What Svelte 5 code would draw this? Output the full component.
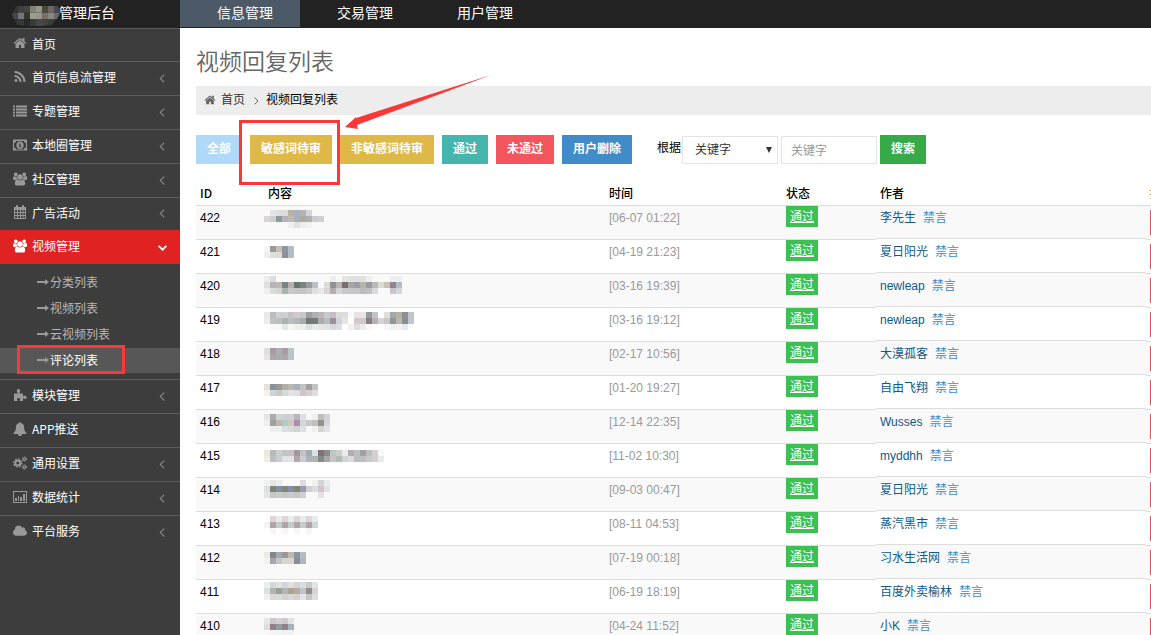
<script>
  const tabs = ['信息管理', '交易管理', '用户管理'];

  const menuTop = [
    { label: '首页', icon: 'home', short: true, leaf: true },
    { label: '首页信息流管理', icon: 'rss' },
    { label: '专题管理', icon: 'list' },
    { label: '本地圈管理', icon: 'money' },
    { label: '社区管理', icon: 'users' },
    { label: '广告活动', icon: 'calendar', short: true },
    { label: '视频管理', icon: 'users', active: true }
  ];
  const subMenu = ['分类列表', '视频列表', '云视频列表', '评论列表'];
  const menuBottom = [
    { label: '模块管理', icon: 'puzzle' },
    { label: 'APP推送', icon: 'bell', leaf: true },
    { label: '通用设置', icon: 'cogs' },
    { label: '数据统计', icon: 'chart' },
    { label: '平台服务', icon: 'cloud' }
  ];

  // Masked content: each string is one line of 6px blocks, "-" leaves a gap.
  const rows = [
    { id: 422, time: '06-07 01:22', author: '李先生', y: 4, mask: ['- e4e4e4 dedede dcdcde bab2a8 a8b2be b4b4b6 d4d6dc', 'dcd4d8 ccd0cc 8c9a9e b8b0bc c0b8ae a8b0b8 b0a8a2 b0b0b4 ccccd0 d0d0d4', '- - - - f0f0f0 dfe1e5 eeeeee f0f2ee'] },
    { id: 421, time: '04-19 21:23', author: '夏日阳光', y: 6, mask: ['f6f4f2 9c9896 c4beb8 8c96a0 b4bcc8', 'f2eee8 dce0de e0dad2 908e9a b4bcc6'] },
    { id: 420, time: '03-16 19:39', author: 'newleap', y: 2, mask: ['ececec dcdcdc - - - - - - - - - eeeeee - e4e4e4 e0e0e0 e0e0e0 e0e0e0 eeeeee - - - eceef0 eceef2', 'dedede b4b8b4 bcb6b4 748488 b8b0ac 6c7472 7c8480 989c9c b8c0c8 - dedcd6 909294 b8b4b0 786c6e a8a4a4 9c9ca8 b4b4ac 989c9c b8bab8 dadcd8 c8c4b0 908490 b4bcc8', 'eeeeee dcdcd8 d8d4d0 a8b4b0 c8c8cc c4c4c0 c4c4c0 cccccc dce0e4 e8e8e8 d8d4d4 b4acb0 d4d4d8 c8c8cc c4c8c8 c8c4c8 bcbcc0 c0c0c4 d8dadc - - d0c4cc d0d8e0'] },
    { id: 419, time: '03-16 19:12', author: 'newleap', y: 4, mask: ['e8e8e8 bcbcc0 d0d0d0 d0d0d4 c4c4c8 d4c8cc c4c8c8 9ca0a0 acb0b4 b8b8bc c8c8c8 c8bcc8 dcdcd8 e0dedc f5fbff ece0e8 eee4e6 989c98 c0c4cc - e0e0e0 a4a8a8 b4b0a4 8c9090 c0c4cc', 'ececec c0c4c0 bcc0c0 acb4b4 c0bcc4 b0b8b8 a8acac 707876 747c7a acacb0 b8bcc4 9c909c d0d4d8 e4e4e0 ffffff d4c8d0 d4c8d0 888078 b4b0c0 d4d4d8 c8c8c8 909898 c0b8b0 889090 c0c4cc', '- f8faf8 f8f8f4 e4e8e8 f8f4f4 f0f0f0 eeeeee dce0e0 e8ece8 e6e6e6 dce4e4 d8d8dc dce0e8 - f4f0f0 dce0dc ececec f8f8f8 - - f8f8f8 eef2f0 f2f2f2 e6eaec'] },
    { id: 418, time: '02-17 10:56', author: '大漠孤客', y: 6, mask: ['e0e0e0 a89ca4 acb0b4 a89ca4 bcc4c8', 'e4e4e4 b0a4ac a0b0b0 b0a4ac b8c4c8'] },
    { id: 417, time: '01-20 19:27', author: '自由飞翔', y: 8, mask: ['ecdfd4 88949c 9c9894 acb0a8 bcb8b0 a8b0bc c0c4c4 a4a0a0 c0c4c8', 'f4f0ea d0d4d4 c4cccc d8d8d8 e4e2e8 e0e0e4 ccc4c8 d4d0d0 dedee2'] },
    { id: 416, time: '12-14 22:35', author: 'Wusses', y: 4, mask: ['e8e4e0 a8acac d0d4d0 ccd0cc d0d0d0 bcb4bc dce0e4 f8f8f8 f0f0f0 bcc0b8 d0d4d8', 'f0eeea a0a09c bcb8b0 b4cac8 d0c8bc a88eaa d4d8d8 c8c8cc c4c0c0 909494 d4d8dc', '- eeeeee eaeeee dadee0 dadada d0d4d0 dce0e4 - f0f0ee d8d4d4 e4e4e8'] },
    { id: 415, time: '11-02 10:30', author: 'myddhh', y: 6, mask: ['f0e8e0 b4bcbc ccd0cc c4c4c4 ccc0c8 a098a0 c0c4bc a0acb8 dce0dc 80707a 8c8c88 bcc4cc ccd0cc ecece8 b4acbc bcc0b8 a0a0a8 bcc0c4 d8d0d0 f2faff', 'f4ece6 bcc0bc c8ccd4 e0e4e0 e4e4e4 b0a8a8 c8ccd0 b0b4b4 acb4b4 848a86 a4a8a8 c8c4c4 b4bcb8 d4d4d8 dcdcd8 bcbcc4 bcc0c0 ccc8c4 d0d0d8 ecece6'] },
    { id: 414, time: '09-03 00:47', author: '夏日阳光', y: 2, mask: ['f0f0f0 e6e6e6 ececec - - - dcdce2 - f0f0ee d4d4d4 e8eaec', 'dce0e0 808478 8490a0 808878 8490a0 808878 9c9ca8 d0d0d4 dcdce0 d4c4cc e0e4e8', 'e4e4e4 c4c8c4 c8ccd0 c4c8c4 c8ccd0 c4c8c4 ccd0d4 - - e8dfe8'] },
    { id: 413, time: '08-11 04:53', author: '蒸汽黑市', y: 4, mask: ['- dfd4da e8ebeb dfd4da e8ebeb dfd4da e8ebeb dfd4da e8ebeb', 'f4f4f0 b0a4ac c8ccc8 b0a4ac c8ccc8 b0a4ac c8ccc8 b0a4ac d0d6d8', '- f8f4f8 - f8f4f8 - f8f4f8 - f8f4f8'] },
    { id: 412, time: '07-19 00:18', author: '习水生活网', y: 6, mask: ['eeeae6 84888c a0a8b4 9c9894 bcb8b0 8c949c b4bcc4', 'f4f2ea a8a4b0 c8c4c0 d4d8d4 dcd4d0 8c8c98 b0b4c0'] },
    { id: 411, time: '06-19 18:19', author: '百度外卖榆林', y: 2, mask: ['eceeec d8d8dc e0e2dc d4d4dc e0e0dc d4d4d4 dadce4 c8ccc8 e4e4e8', 'd8e2e0 b4b4b0 98a09a b4b4b0 a8a498 b4ac9c c0c4d0 948e92 d4d4d8', 'f0f0f0 dadada d8dcd8 d4d0d0 d8d8d8 d4d0d0 e4e4e8 c4c8c8 dedee2'] },
    { id: 410, time: '04-24 11:52', author: '小K', y: 4, mask: ['e8e8e8 d0c6cc d0d4d4 d0c6cc e0e4e4', 'dedede 948088 909ca4 948088 a8b4bc', '- f4f4f4 f4f4f4 eef2f4 eef2f4'] }
  ];

  const logoMask = ['343434 404040 444444 808078 989490 4c4838 686868 484848', '444848 747676 343434 98a088 989490 787060 888480 686868', '303434 383838 282828 343c3c 484848 444440 3c3c3c 303030'];

  let field = $state('关键字');
  let keyword = $state('');
</script>

{#snippet blocks(lines, y)}
  {#each lines as line, r}
    {#each line.split(' ') as c, i}
      {#if c !== '-'}<rect x={i * 6} y={y + r * 6} width="6" height="6" fill={'#' + c} />{/if}
    {/each}
  {/each}
{/snippet}

{#snippet icon(name)}
  {#if name === 'home'}
    <svg class="ico" viewBox="0 0 1792 1792"><path d="M1472 992v480q0 26-19 45t-45 19h-384v-384h-256v384h-384q-26 0-45-19t-19-45v-480q0-1 .5-3t.5-3l575-474 575 474q1 2 1 6zm223-69l-62 74q-8 9-21 11h-3q-13 0-21-7l-692-577-692 577q-12 8-24 7-13-2-21-11l-62-74q-8-10-7-23.5t11-21.5l719-599q32-26 76-26t76 26l244 204v-195q0-14 9-23t23-9h192q14 0 23 9t9 23v408l219 182q10 8 11 21.5t-7 23.5z" /></svg>
  {:else if name === 'rss'}
    <svg class="ico" viewBox="0 0 1792 1792"><path d="M576 1344q0 80-56 136t-136 56-136-56-56-136 56-136 136-56 136 56 56 136zm512 123q2 28-17 48-18 21-47 21h-135q-25 0-43-16.5t-20-41.5q-22-229-184.5-391.5t-391.5-184.5q-25-2-41.5-20t-16.5-43v-135q0-29 21-47 17-17 43-17h5q160 13 306 80.5t259 181.5q114 113 181.5 259t80.5 306zm512 2q2 27-18 47-18 20-46 20h-143q-26 0-44.5-17.5t-19.5-42.5q-12-215-101-408.5t-231.5-336-336-231.5-408.5-102q-25-1-42.5-19.5t-17.5-43.5v-143q0-28 20-46 18-18 44-18h3q262 13 501.5 120t425.5 294q187 186 294 425.5t120 501.5z" /></svg>
  {:else if name === 'list'}
    <svg class="ico" viewBox="0 0 14 14"><path d="M0 1.500h2v2H0zM3 1.500h11v2H3zM0 4.500h2v2H0zM3 4.500h11v2H3zM0 7.500h2v2H0zM3 7.500h11v2H3zM0 10.500h2v2H0zM3 10.500h11v2H3z" /></svg>
  {:else if name === 'money'}
    <svg class="ico" viewBox="0 0 14 14"><path fill-rule="evenodd" d="M0 1.500h14v11H0zM1 5v4.500a2 2 0 0 1 2 2h8a2 2 0 0 1 2-2V5a2 2 0 0 1-2-2H3a2 2 0 0 1-2 2z" /><path fill-rule="evenodd" d="M7 3.400a3.600 3.800 0 1 1 0 7.600a3.600 3.800 0 1 1 0-7.600zM5.600 5.400v1h.8v2h-.9v.9h3v-.9h-.9v-3h-1z" /></svg>
  {:else if name === 'users'}
    <svg class="ico" viewBox="0 0 1920 1792"><path d="M593 896q-162 5-265 128h-134q-82 0-138-40.5t-56-118.5q0-353 124-353 6 0 43.5 21t97.5 42.5 119 21.5q67 0 133-23-5 37-5 66 0 159 92 293zm1071 637q0 120-73 189.5t-194 69.5h-874q-121 0-194-69.5t-73-189.5q0-53 3.5-103.5t14-109 26.5-108.5 43-97.5 62-81 85.5-53.5 111.5-20q10 0 43 21.5t73 48 107 48 135 21.5 135-21.5 107-48 73-48 43-21.5q61 0 111.5 20t85.5 53.5 62 81 43 97.5 26.5 108.5 14 109 3.5 103.5zm-1024-1277q0 106-75 181t-181 75-181-75-75-181 75-181 181-75 181 75 75 181zm704 384q0 159-112.5 271.5t-271.5 112.5-271.5-112.5-112.5-271.5 112.5-271.5 271.5-112.5 271.5 112.5 112.5 271.5zm576 225q0 78-56 118.5t-138 40.5h-134q-103-123-265-128 92-134 92-293 0-29-5-66 66 23 133 23 59 0 119-21.5t97.5-42.5 43.5-21q124 0 124 353zm-128-609q0 106-75 181t-181 75-181-75-75-181 75-181 181-75 181 75 75 181z" /></svg>
  {:else if name === 'calendar'}
    <svg class="ico" viewBox="0 0 14 14"><path fill-rule="evenodd" d="M1 2h2V1a1 1 0 0 1 2 0v1h4V1a1 1 0 0 1 2 0v1h2v12H1zM2 5v2h2V5zM5 5v2h2V5zM8 5v2h1.500V5zM10.500 5v2H12V5zM2 8v2h2V8zM5 8v2h2V8zM8 8v2h1.500V8zM10.500 8v2H12V8zM2 11v2h2v-2zM5 11v2h2v-2zM8 11v2h1.500v-2zM10.500 11v2H12v-2z" /></svg>
  {:else if name === 'puzzle'}
    <svg class="ico" viewBox="0 0 14 14"><path d="M1 5.500h3.300c.5 0 .6-.4.300-.8C3.300 3 3.700 1 5.500 1s2.200 2 1 3.700c-.3.400-.2.800.4.800H10v2.300c0 .6.500.8.900.5 1.400-1 2.600-.4 2.600 1.100s-1.200 2.100-2.600 1.100c-.4-.3-.9-.1-.9.500V13H7.200c-.6 0-.7-.4-.4-.8.8-1 .3-2.100-1.200-2.100s-2 1.100-1.200 2.100c.3.400.2.800-.4.800H1z" /></svg>
  {:else if name === 'bell'}
    <svg class="ico" viewBox="0 0 1792 1792"><path d="M1728 1408q0 52-38 90t-90 38h-448q0 106-75 181t-181 75-181-75-75-181h-448q-52 0-90-38t-38-90q50-42 91-88t85-119.500 74.500-158.500 50-206 19.500-260q0-152 117-282.500t307-158.500q-8-19-8-39 0-40 28-68t68-28 68 28 28 68q0 20-8 39 190 28 307 158.500t117 282.500q0 139 19.500 260t50 206 74.500 158.500 85 119.500 91 88z" /></svg>
  {:else if name === 'cogs'}
    <svg class="ico" viewBox="0 0 14 14">
      <g fill="none" stroke="currentColor">
        <circle cx="4.800" cy="7" r="2.600" stroke-width="2" />
        <circle cx="4.800" cy="7" r="4.100" stroke-width="1.300" stroke-dasharray="1.610 1.610" />
        <circle cx="11.400" cy="3" r="1.300" stroke-width="1.100" />
        <circle cx="11.400" cy="3" r="2.200" stroke-width=".9" stroke-dasharray="1.150 1.150" />
        <circle cx="11.400" cy="11" r="1.300" stroke-width="1.100" />
        <circle cx="11.400" cy="11" r="2.200" stroke-width=".9" stroke-dasharray="1.150 1.150" />
      </g>
    </svg>
  {:else if name === 'chart'}
    <svg class="ico" viewBox="0 0 14 14"><path fill-rule="evenodd" d="M0 1h14v12H0zM1 2v10h12V2zM2 8h2v3H2zM5 6h1v5H5zM7 7h2v4H7zM10 4h2v7h-2z" /></svg>
  {:else if name === 'cloud'}
    <svg class="ico" viewBox="64 128 1920 1536"><path d="M1984 1152q0 159-112.500 271.500t-271.500 112.500h-1088q-185 0-316.500-131.500t-131.500-316.500q0-132 71-241.500t187-163.500q-2-28-2-43 0-212 150-362t362-150q158 0 286.500 88t187.500 230q70-62 166-62 106 0 181 75t75 181q0 75-41 138 129 30 213 134.500t84 239.500z" /></svg>
  {/if}
{/snippet}

{#snippet entry(m)}
  <a class="item" class:short={m.short} class:active={m.active} href="#menu">
    {@render icon(m.icon)}
    <span>{m.label}</span>
    {#if m.active}
      <svg class="chev" viewBox="0 0 8 8"><path d="M.5 2.500L4 6l3.500-3.500" stroke-width="1.600" /></svg>
    {:else if !m.leaf}
      <svg class="chev" viewBox="0 0 8 8"><path d="M5.500 .5L2 4l3.500 3.500" /></svg>
    {/if}
  </a>
{/snippet}

<div class="page">
  <header>
    <div class="brand">
      <svg class="logo" width="48" height="20" viewBox="0 0 48 18" preserveAspectRatio="none" aria-hidden="true">
        <clipPath id="logoShape"><path d="M4 0h42l2 6-3 6-6 5-10 1H17L5 17 0 8z" /></clipPath>
        <g clip-path="url(#logoShape)">{@render blocks(logoMask, 0)}</g>
      </svg>
      <span>管理后台</span>
    </div>
    <nav class="tabs">
      {#each tabs as t, i}<a href="#tab" class:on={i === 0}>{t}</a>{/each}
    </nav>
  </header>

  <div class="body">
    <aside>
      {#each menuTop as m}{@render entry(m)}{/each}
      <div class="sub">
        {#each subMenu as s, i}
          <a href="#sub" class:current={i === 3}>
            <svg class="arrow" viewBox="0 0 12 8"><path d="M0 3h8V1l4 3-4 3V5H0z" /></svg>{s}
          </a>
        {/each}
      </div>
      {#each menuBottom as m}{@render entry(m)}{/each}
    </aside>

    <main>
      <h1>视频回复列表</h1>
      <div class="crumbs">
        {@render icon('home')}
        <a href="#home">首页</a>
        <svg class="sep" viewBox="0 0 8 8"><path d="M2.500 .5L6 4 2.500 7.500" /></svg>
        <span>视频回复列表</span>
      </div>

      <form class="toolbar" onsubmit={(e) => e.preventDefault()}>
        <button type="button" class="sky">全部</button>
        <span class="marked">
          <button type="button" class="gold">敏感词待审</button>
          <svg class="pointer" width="146" height="56" viewBox="0 0 146 56" aria-hidden="true"><path d="M146 1L11 44l0-1L0 53l13 2-1-4z" /></svg>
        </span>
        <button type="button" class="gold">非敏感词待审</button>
        <button type="button" class="teal">通过</button>
        <button type="button" class="red">未通过</button>
        <button type="button" class="blue">用户删除</button>
        <div class="search">
          <label for="field">根据</label>
          <div class="pick">
            <select id="field" bind:value={field}><option>关键字</option></select>
            <svg viewBox="0 0 8 8" aria-hidden="true"><path d="M1 1h6L4 7z" /></svg>
          </div>
          <input type="text" aria-label="关键字" placeholder="关键字" bind:value={keyword} />
          <button type="submit" class="green">搜索</button>
        </div>
      </form>

      <div class="grid">
        <table>
          <colgroup><col class="c1" /><col /><col class="c3" /><col class="c4" /><col class="c5" /><col class="c6" /></colgroup>
          <thead>
            <tr><th>ID</th><th>内容</th><th>时间</th><th>状态</th><th>作者</th><th>操作</th></tr>
          </thead>
          <tbody>
            {#each rows as r}
              <tr>
                <td>{r.id}</td>
                <td class="masked"><svg width="152" height="30" viewBox="0 0 152 30" shape-rendering="crispEdges">{@render blocks(r.mask, r.y)}</svg></td>
                <td class="time">[{r.time}]</td>
                <td class="state"><a href="#state">通过</a></td>
                <td class="author"><a href="#author">{r.author}</a><a class="mute" href="#mute">禁言</a></td>
                <td class="ops"><button type="button">删除</button></td>
              </tr>
            {/each}
          </tbody>
        </table>
      </div>
    </main>
  </div>
</div>

<style>
  :global(body) {
    margin: 0;
    overflow: hidden;
  }
  * {
    box-sizing: border-box;
  }
  .page {
    display: flex;
    flex-direction: column;
    height: 100vh;
    overflow: hidden;
    background: #fff;
    color: #000;
    font: 12px/17px 'Liberation Sans', 'Noto Sans CJK SC', sans-serif;
  }
  a {
    color: inherit;
    text-decoration: none;
  }
  button,
  input,
  select {
    font: inherit;
    margin: 0;
    border-radius: 0;
  }
  header {
    display: flex;
    height: 28px;
    flex: none;
    background: #222;
    color: #fff;
    font-size: 14px;
    line-height: 26px;
  }
  .brand {
    display: flex;
    width: 180px;
    padding-left: 12px;
  }
  .logo {
    margin-top: 6px;
    margin-right: -1px;
  }
  .tabs {
    display: flex;
  }
  .tabs a {
    width: 120px;
    height: 27px;
    padding-left: 37px;
  }
  .tabs .on {
    background: #4c5966;
  }
  .body {
    display: flex;
    flex: 1;
    min-height: 0;
  }
  aside {
    width: 180px;
    flex: none;
    background: #3d3d3d;
    color: #fff;
    font-family: 'Noto Sans CJK SC', sans-serif;
  }
  .item {
    display: flex;
    align-items: center;
    height: 34px;
    padding: 0 13px 4px;
    border-top: 1px solid #5c5c5c;
  }
  .item.short {
    height: 33px;
  }
  .item.active {
    border-color: #e02222;
    background: #e02222;
  }
  .ico {
    width: 14px;
    height: 14px;
    flex: none;
    margin-right: 5px;
    fill: currentColor;
    color: #999;
  }
  .active .ico {
    color: #fff;
  }
  .chev {
    width: 9px;
    height: 9px;
    margin: 3px 0 0 auto;
    fill: none;
    stroke: #888;
  }
  .active .chev {
    stroke: #fff;
  }
  .sub {
    display: flex;
    flex-direction: column;
    gap: 1px;
    padding: 6px 0;
    color: #b8b8b8;
  }
  .sub a {
    display: flex;
    align-items: center;
    height: 25px;
    padding: 0 0 3px 37px;
  }
  .arrow {
    width: 12px;
    height: 8px;
    margin: 2px 1px 0 0;
    fill: #999;
  }
  .sub .current {
    position: relative;
    background: #575757;
    color: #fff;
  }
  .current::after {
    content: '';
    position: absolute;
    inset: -3px 55px -1px 17px;
    border: 3px solid #fb3838;
  }
  main {
    flex: 1;
    min-width: 0;
    padding-left: 16px;
    overflow: hidden;
  }
  h1 {
    margin: 18px 0 8px;
    color: #666;
    font-size: 23px;
    font-weight: 350;
    line-height: 32px;
  }
  .crumbs {
    display: flex;
    align-items: center;
    height: 29px;
    padding: 0 8px 1px;
    background: #ededed;
    color: #333;
  }
  .crumbs .ico {
    width: 12px;
    height: 12px;
    color: #666;
  }
  .crumbs span {
    color: #000;
  }
  .sep {
    width: 8px;
    height: 8px;
    margin: 1px 6px 0 7px;
    fill: none;
    stroke: #666;
  }
  .toolbar {
    display: flex;
    gap: 8px;
    margin-top: 20px;
    white-space: nowrap;
  }
  .toolbar button {
    height: 29px;
    padding: 0 11px;
    border: 0;
    color: #fff;
    font-weight: 700;
  }
  .sky { background: #b0d8f8; }
  .gold { background: #dfb948; }
  .teal { background: #44b6ae; }
  .red { background: #f3565d; }
  .blue { background: #428bca; }
  .green { background: #35aa47; }
  .marked {
    position: relative;
    z-index: 1;
  }
  .marked::after {
    content: '';
    position: absolute;
    inset: -15px -8px -21px -11px;
    border: 3px solid #fb3838;
  }
  .pointer {
    position: absolute;
    left: 95px;
    top: -61px;
    fill: #fb3838;
  }
  .search {
    display: flex;
    margin-left: 17px;
  }
  .search label {
    padding: 5px 1px 0 0;
  }
  .pick {
    display: grid;
    margin-right: 3px;
  }
  .pick > * {
    grid-area: 1 / 1;
  }
  .pick svg {
    width: 8px;
    height: 8px;
    place-self: center end;
    margin-right: 5px;
    fill: #333;
    pointer-events: none;
  }
  select,
  input {
    width: 96px;
    height: 28px;
    margin-top: 1px;
    padding: 1px 9px 0;
    border: 1px solid #e5e5e5;
    background: #fff;
    color: #333;
  }
  select {
    appearance: none;
    padding-left: 12px;
  }
  input {
    margin-right: 3px;
  }
  input::placeholder {
    color: #999;
  }
  .grid {
    margin-top: 17px;
    overflow: hidden;
    width: 100%;
  }
  table {
    width: calc(100% + 60px);
    table-layout: fixed;
    border-collapse: separate;
    border-spacing: 0;
  }
  .c1 { width: 68px; }
  .c3 { width: 177px; }
  .c4 { width: 94px; }
  .c5 { width: 270px; }
  .c6 { width: 65px; }
  th {
    height: 25px;
    padding: 0 4px 4px;
    border-bottom: 1px solid #ddd;
    font-family: 'Noto Sans CJK SC', sans-serif;
    font-weight: 500;
    text-align: left;
    vertical-align: bottom;
  }
  td {
    height: 34px;
    padding: 4px 4px 0;
    border-bottom: 1px solid #ddd;
    vertical-align: top;
  }
  tbody tr {
    --own: #fff;
    --next: #f9f9f9;
    background: var(--own);
  }
  tbody tr:nth-child(odd) {
    --own: #f9f9f9;
    --next: #fff;
  }
  .masked {
    padding: 0;
  }
  .masked svg {
    display: block;
  }
  .time {
    color: #999;
  }
  .state {
    padding-top: 0;
  }
  .state a {
    display: inline-block;
    height: 21px;
    padding: 3px 4px 1px;
    background: #3cc051;
    color: #fff;
    text-decoration: underline;
  }
  .author {
    border-bottom: 0;
    background: linear-gradient(to top, var(--next) 1px, #ddd 1px, #ddd 2px, var(--own) 2px);
    color: #0b5a8a;
  }
  .mute {
    margin-left: 7px;
    color: #428bca;
  }
  .ops {
    padding-top: 4px;
  }
  .ops button {
    height: 25px;
    padding: 0 10px;
    border: 0;
    background: #e6505c;
    color: #fff;
  }
</style>
